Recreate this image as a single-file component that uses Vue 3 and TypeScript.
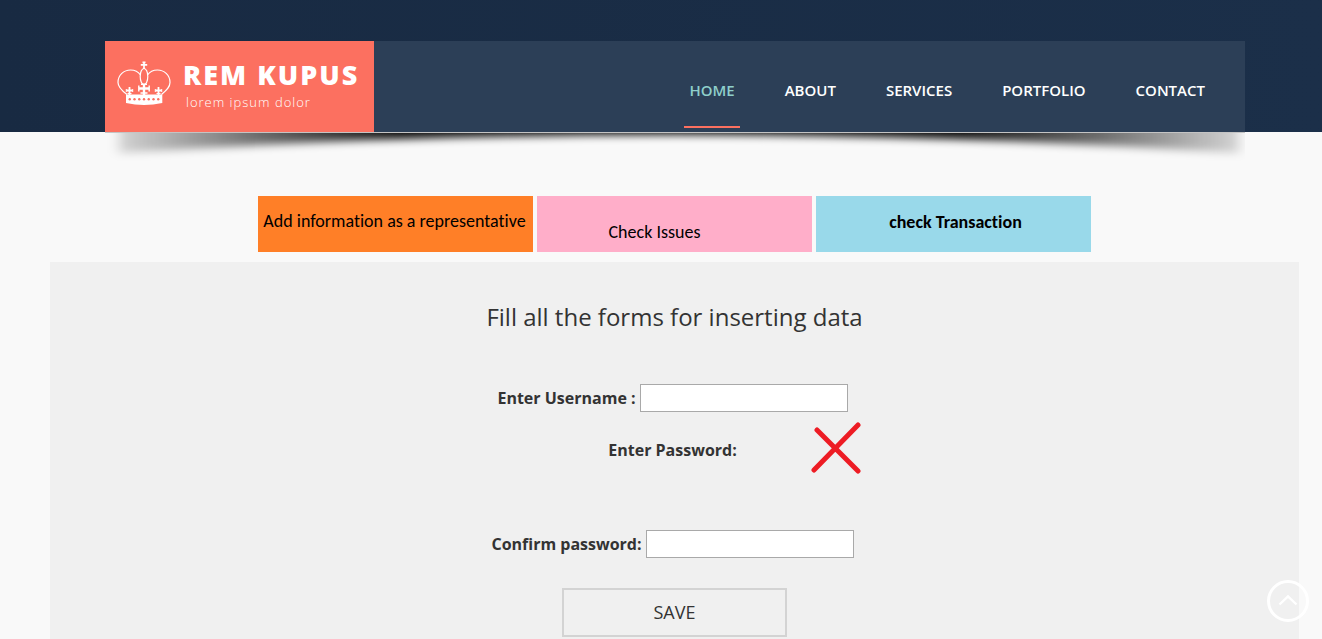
<script setup lang="ts">
import { ref } from 'vue'

interface NavItem {
  label: string
  active?: boolean
}

const nav: NavItem[] = [
  { label: 'HOME', active: true },
  { label: 'ABOUT' },
  { label: 'SERVICES' },
  { label: 'PORTFOLIO' },
  { label: 'CONTACT' },
]

const username = ref('')
const confirmation = ref('')
</script>

<template>
  <div class="page">
    <header class="header">
      <div class="bar">
        <a class="logo" href="#">
          <svg class="crown" viewBox="0 0 54 46" aria-hidden="true">
            <g fill="none" stroke="#fff">
              <path
                d="M10 33.500C4 29 1 26 1 21.500C1 14 7 9 13.500 9C18 9 21.500 11 23.500 14M44.500 33.500C50 29 53 26 53 21.500C53 14 47 9 40.500 9C36 9 32.500 11 30.500 14"
                stroke-width="1.200"
              />
              <ellipse cx="27" cy="15.500" rx="3.800" ry="8" stroke-width="1.200" />
              <path d="M27 1v7M23.800 3.800h6.400M25.500 1.300h3" stroke-width="1.700" />
              <path d="M27 23v11M22 27.500h10" stroke-width="2.400" />
              <path d="M24 23.300h6M21.800 24.500v6M32.200 24.500v6M23.500 32h7" stroke-width="1.400" />
              <path d="M12.500 26v8M9.500 29.500h6M41.500 26v8M38.500 29.500h6" stroke-width="1.800" />
              <path d="M9.300 28v3M15.700 28v3M38.300 28v3M44.700 28v3M10.500 32.500h4M39.500 32.500h4" stroke-width="1" />
            </g>
            <path d="M9 33.500H45.300V42Q27 46 9 42z" fill="#fff" />
            <g fill="#fc7060">
              <circle v-for="n in 7" :key="n" :cx="8 + n * 4.75" cy="38.300" r="1.200" />
            </g>
          </svg>
          <span class="brand">
            <span class="brand-name">REM KUPUS</span>
            <span class="brand-tag">lorem ipsum dolor</span>
          </span>
        </a>
        <nav class="nav" aria-label="Main">
          <a v-for="item in nav" :key="item.label" href="#" :class="{ active: item.active }">{{ item.label }}</a>
        </nav>
      </div>
    </header>

    <svg class="shadow" viewBox="0 0 1140 36" preserveAspectRatio="none" aria-hidden="true">
      <defs>
        <linearGradient id="shade" x1="0" x2="1" y1="0" y2="0">
          <stop offset="0" stop-color="#000" stop-opacity="0.150" />
          <stop offset="0.120" stop-color="#000" stop-opacity="0.550" />
          <stop offset="0.250" stop-color="#000" stop-opacity="0.950" />
          <stop offset="0.500" stop-color="#000" stop-opacity="1" />
          <stop offset="0.750" stop-color="#000" stop-opacity="0.950" />
          <stop offset="0.880" stop-color="#000" stop-opacity="0.550" />
          <stop offset="1" stop-color="#000" stop-opacity="0.150" />
        </linearGradient>
        <filter id="soft" x="-5%" y="-100%" width="110%" height="300%">
          <feGaussianBlur stdDeviation="6 4" />
        </filter>
      </defs>
      <path d="M14 -20H1134V21Q570 -16 14 21z" fill="url(#shade)" filter="url(#soft)" />
      <path d="M0 0H1140" stroke="#c4c4c4" stroke-width="2" />
    </svg>

    <main>
      <div class="actions">
        <button type="button" class="action add">Add information as a representative</button>
        <button type="button" class="action issues">Check Issues</button>
        <button type="button" class="action transaction">check Transaction</button>
      </div>

      <form class="panel" @submit.prevent>
        <h1>Fill all the forms for inserting data</h1>
        <div class="field">
          <label for="username">Enter Username :</label>
          <input id="username" v-model="username" type="text" />
        </div>
        <div class="field password">
          <span>Enter Password:</span>
          <svg class="cross" viewBox="0 0 50 52" aria-hidden="true">
            <path d="M6 8L47 49M47 3L3 48" stroke="#ed1c24" stroke-width="5" stroke-linecap="round" />
          </svg>
        </div>
        <div class="field">
          <label for="confirmation">Confirm password:</label>
          <input id="confirmation" v-model="confirmation" type="password" />
        </div>
        <button type="submit" class="save">SAVE</button>
      </form>
    </main>

    <a class="to-top" href="#" aria-label="Back to top">
      <svg viewBox="0 0 42 42" fill="none" stroke="#fff" aria-hidden="true">
        <circle cx="21" cy="21" r="19.500" stroke-width="3" />
        <path d="M12.500 24.500L21 16.500l8.500 8" stroke-width="2.400" />
      </svg>
    </a>
  </div>
</template>

<style>
body {
  background: #f9f9f9;
}
</style>

<style scoped>
.page {
  height: 100vh;
  overflow: hidden;
  font-family: 'Open Sans', 'Noto Sans', sans-serif;
  color: #333;
  background: #f9f9f9;
}

.page * {
  box-sizing: border-box;
}

.header {
  padding: 41px 77px 0 105px;
  background: linear-gradient(90deg, #182a42, #1b2f49);
}

.bar {
  display: flex;
  justify-content: space-between;
  height: 91px;
  background: #2c3f57;
}

.logo {
  display: flex;
  gap: 12px;
  width: 269px;
  padding: 20px 0 0 12px;
  background: #fc7060;
  color: #fff;
  text-decoration: none;
}

.crown {
  width: 54px;
  height: 46px;
}

.brand {
  display: flex;
  flex-direction: column;
  white-space: nowrap;
}

.brand-name {
  font-size: 27px;
  font-weight: 800;
  line-height: 28px;
  letter-spacing: 2px;
}

.brand-tag {
  padding-left: 3px;
  font-size: 13px;
  font-weight: 300;
  line-height: 26px;
  letter-spacing: 1px;
}

.nav {
  display: flex;
  gap: 40px;
  padding: 0 35px 4px 0;
}

.nav a {
  padding: 37px 5px 0;
  border-bottom: 2px solid transparent;
  font-size: 15px;
  font-weight: 600;
  line-height: 24px;
  color: #fff;
  text-decoration: none;
}

.nav a.active {
  color: #8fcfcb;
  border-color: #fc7060;
}

.shadow {
  display: block;
  width: calc(100% - 182px);
  height: 36px;
  margin-left: 105px;
}

main {
  padding: 0 23px 0 50px;
}

.actions {
  display: grid;
  grid-template-columns: repeat(3, 1fr);
  gap: 4px;
  max-width: 833px;
  margin: 28px auto 10px;
}

.action {
  height: 56px;
  padding: 0;
  border: 0;
  font-family: Calibri, Carlito, Lato, sans-serif;
  font-size: 18px;
  font-variant-ligatures: none;
  line-height: 20px;
  color: #000;
  white-space: nowrap;
}

.add {
  padding: 0 2px 6px 0;
  background: #ff7f27;
}

.issues {
  padding: 15px 40px 0 0;
  background: #ffaec9;
}

.transaction {
  padding: 0 0 4px 4px;
  font-weight: 700;
  background: #99d9ea;
}

.panel {
  display: flex;
  flex-direction: column;
  align-items: center;
  padding: 36px 0 40px;
  background: #f0f0f0;
}

h1 {
  margin: 0 0 48px;
  font-size: 24px;
  font-weight: 400;
  line-height: 38px;
}

.field {
  display: flex;
  align-items: center;
  gap: 4px;
  height: 28px;
  padding-right: 4px;
  font-size: 16px;
  font-weight: 700;
}

.field input {
  width: 208px;
  height: 28px;
  padding: 2px 6px;
  border: 1px solid #a9a9a9;
  background: #fff;
  font: inherit;
}

.password {
  position: relative;
  margin: 24px 0 66px;
}

.cross {
  position: absolute;
  left: 100%;
  top: -14px;
  width: 50px;
  height: 52px;
  margin-left: 70px;
}

.save {
  width: 225px;
  height: 49px;
  margin-top: 30px;
  padding: 0 0 2px;
  border: 2px solid #d3d3d3;
  background: transparent;
  font-family: inherit;
  font-size: 18px;
  font-weight: 400;
  color: #333;
}

.to-top {
  position: fixed;
  right: 13px;
  bottom: 17px;
  width: 42px;
  height: 42px;
}

.to-top svg {
  display: block;
}
</style>
